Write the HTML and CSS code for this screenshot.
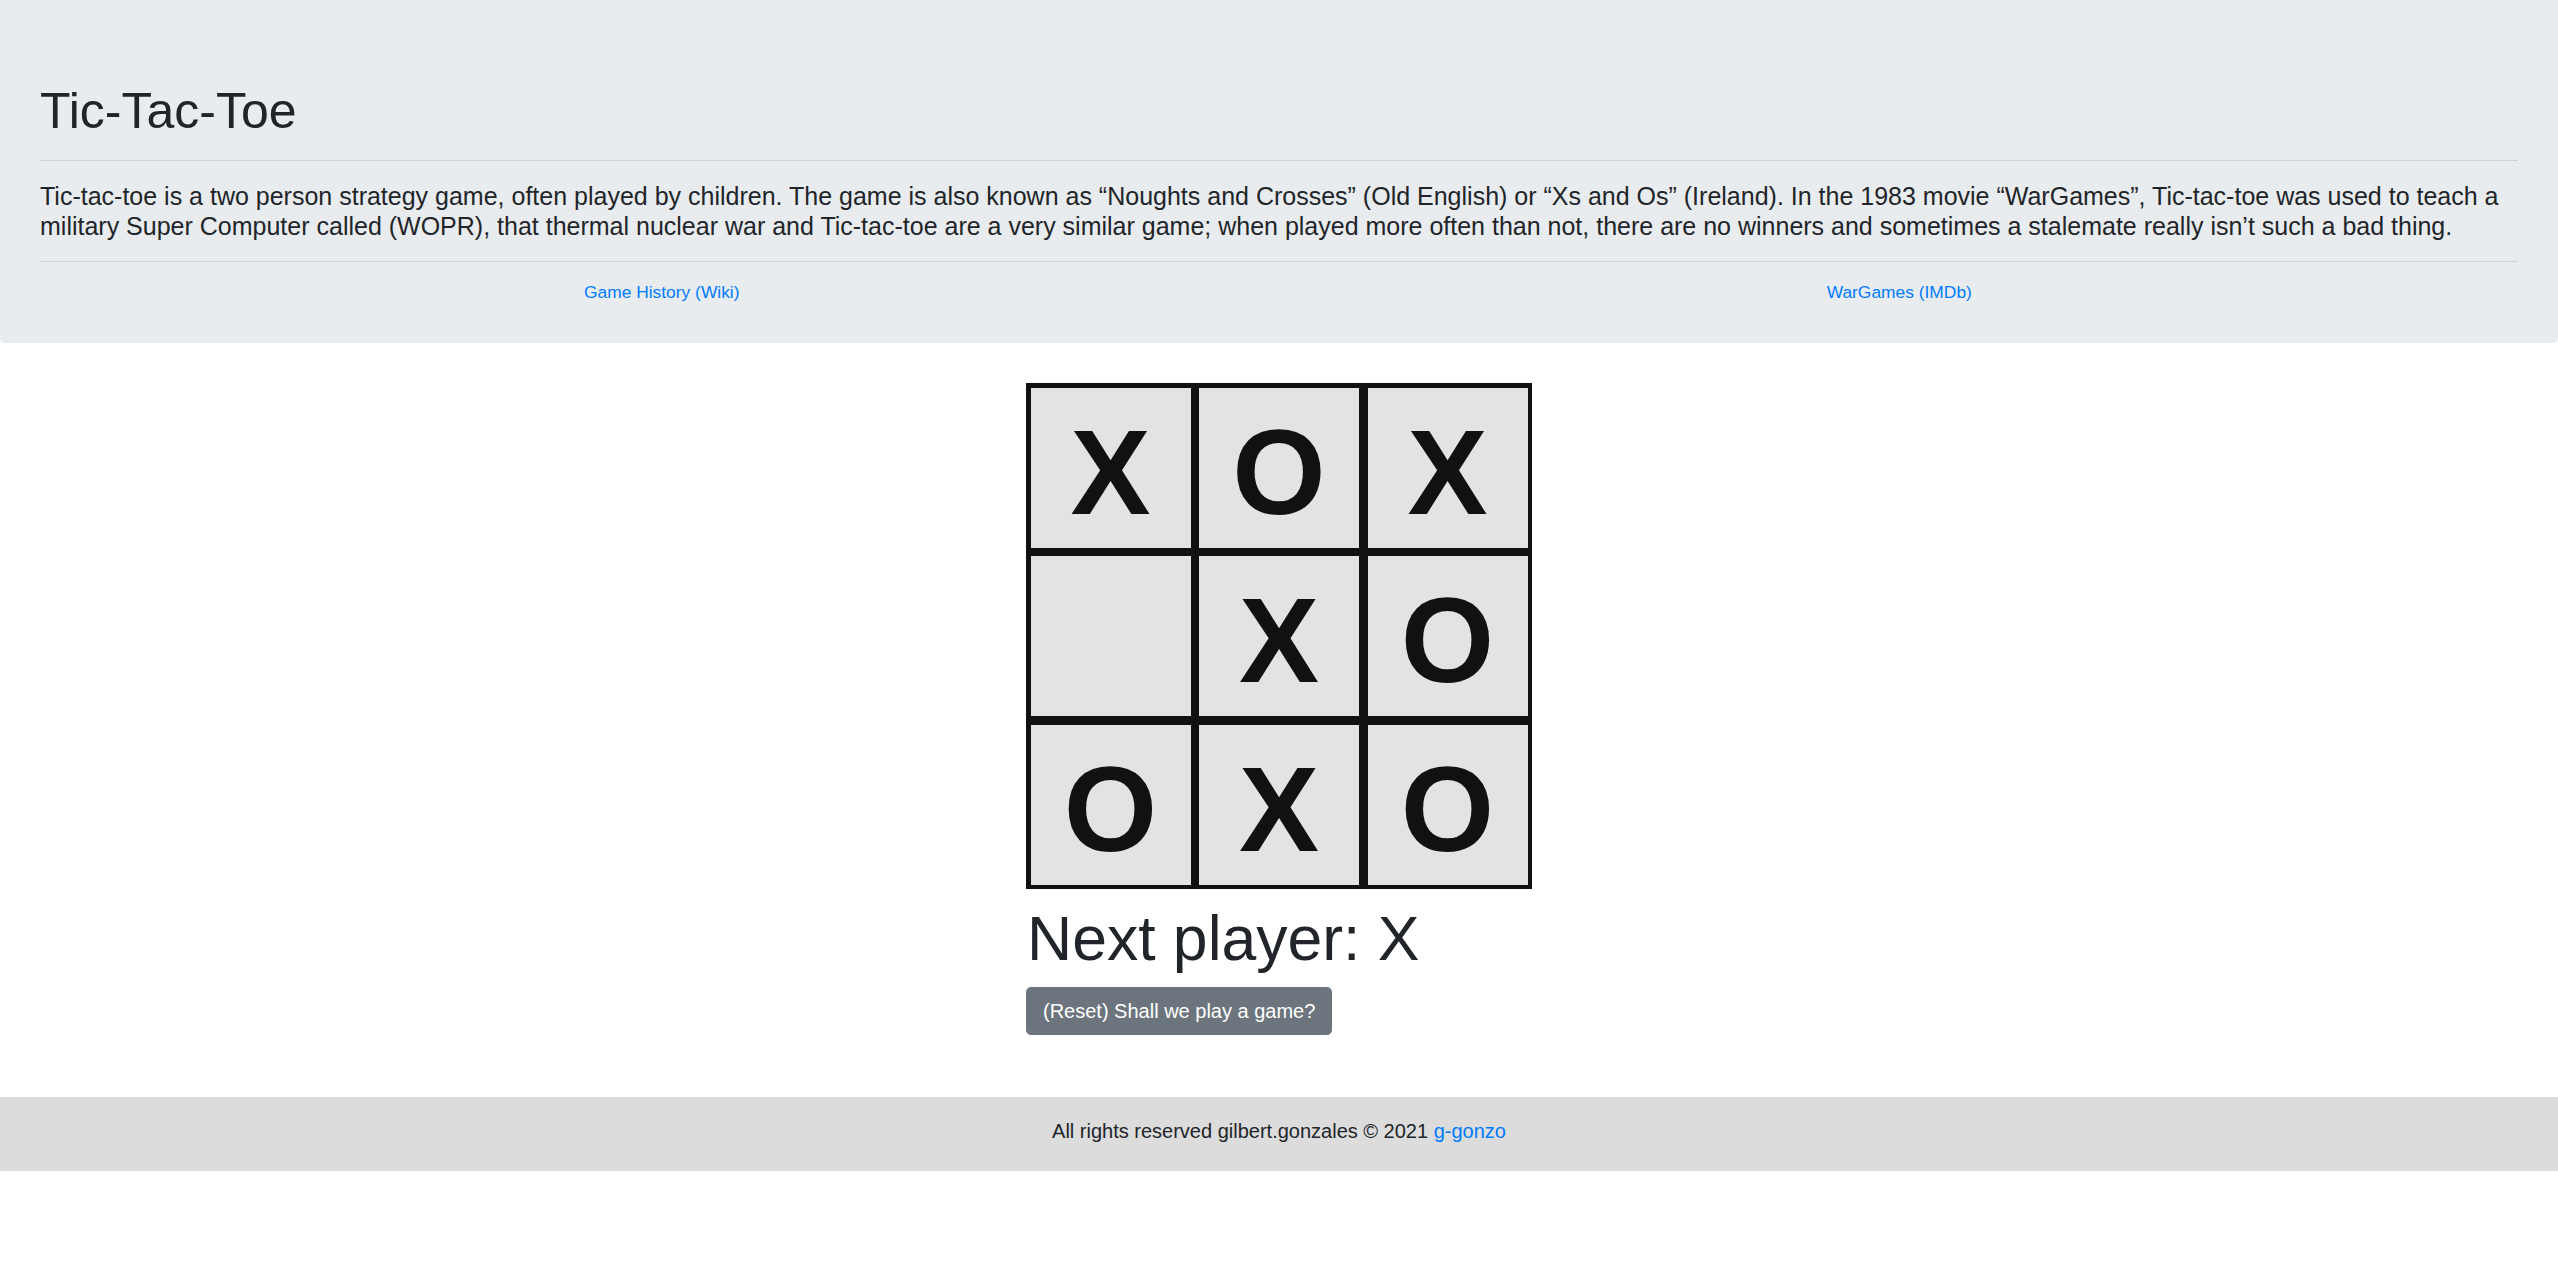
FILE: index.html
```html
<!DOCTYPE html>
<html lang="en">
<head>
<meta charset="utf-8">
<title>Tic-Tac-Toe</title>
<link rel="stylesheet" href="styles.css">
</head>
<body>
<header class="jumbotron">
  <h1 class="title">Tic-Tac-Toe</h1>
  <hr class="rule rule-top">
  <p class="lead">Tic-tac-toe is a two person strategy game, often played by children. The game is also known as “Noughts and Crosses” (Old English) or “Xs and Os” (Ireland). In the 1983 movie “WarGames”, Tic-tac-toe was used to teach a military Super Computer called (WOPR), that thermal nuclear war and Tic-tac-toe are a very similar game; when played more often than not, there are no winners and sometimes a stalemate really isn’t such a bad thing.</p>
  <hr class="rule rule-bottom">
  <nav class="links">
    <a class="link" href="#">Game History (Wiki)</a>
    <a class="link" href="#">WarGames (IMDb)</a>
  </nav>
</header>
<main class="game">
  <div class="game-inner">
    <div class="board">
      <button class="square">X</button>
      <button class="square">O</button>
      <button class="square">X</button>
      <button class="square"></button>
      <button class="square">X</button>
      <button class="square">O</button>
      <button class="square">O</button>
      <button class="square">X</button>
      <button class="square">O</button>
    </div>
    <div class="status">Next player: X</div>
    <button class="btn-reset">(Reset) Shall we play a game?</button>
  </div>
</main>
<footer class="footer">
  <p class="footer-text">All rights reserved gilbert.gonzales © 2021 <a class="link-plain" href="#">g-gonzo</a></p>
</footer>
</body>
</html>
```
FILE: styles.css
```css
html, body {
  margin: 0;
  padding: 0;
  background: #fff;
}
body {
  font-family: "Liberation Sans", Arial, sans-serif;
  color: #212529;
  font-size: 16px;
  line-height: 1.5;
}
.jumbotron {
  background: #e9ecef;
  padding: 81px 40px 38px 40px;
  border-radius: 0 0 5px 5px;
}
.title {
  margin: 0;
  font-size: 50px;
  font-weight: 400;
  line-height: 60px;
}
.rule {
  border: 0;
  border-top: 1px solid rgba(0, 0, 0, 0.1);
  height: 0;
  margin: 0;
}
.rule-top {
  margin-top: 19px;
}
.lead {
  font-size: 25px;
  line-height: 30px;
  margin: 20.3px 0 19.7px 0;
}
.links {
  display: grid;
  grid-template-columns: 1fr 1fr;
  text-align: center;
  margin-top: 17.2px;
  font-size: 17.4px;
  line-height: 26px;
  padding-left: 3px;
}
.link, .link-plain {
  color: #007bff;
  text-decoration: none;
}
.game {
  display: flex;
  justify-content: center;
  padding-top: 40.3px;
}
.game-inner {
  display: flex;
  flex-direction: column;
  align-items: flex-start;
}
.board {
  display: grid;
  grid-template-columns: repeat(3, 160px);
  grid-template-rows: repeat(3, 160px);
  gap: 8.5px;
  padding: 4.5px;
  background: #111;
}
.square {
  border: 0;
  margin: 0;
  padding: 8px 0 0 0;
  background: #e1e4e3;
  color: #111;
  font-family: "Liberation Sans", Arial, sans-serif;
  font-weight: 700;
  font-size: 120px;
  line-height: 1;
  display: flex;
  align-items: center;
  justify-content: center;
}
.status {
  font-size: 62.5px;
  line-height: 1;
  margin-top: 17.8px;
  padding-left: 1px;
}
.btn-reset {
  margin-top: 17px;
  font-family: "Liberation Sans", Arial, sans-serif;
  font-size: 20px;
  line-height: 30px;
  padding: 8px 16px;
  color: #fff;
  background: #6c757d;
  border: 1px solid #6c757d;
  border-radius: 4.8px;
}
.footer {
  margin-top: 62px;
  background: #dcdcdc;
  height: 74px;
  box-sizing: border-box;
  padding-top: 19px;
  text-align: center;
}
.footer-text {
  margin: 0;
  font-size: 20px;
  line-height: 30px;
}
```
